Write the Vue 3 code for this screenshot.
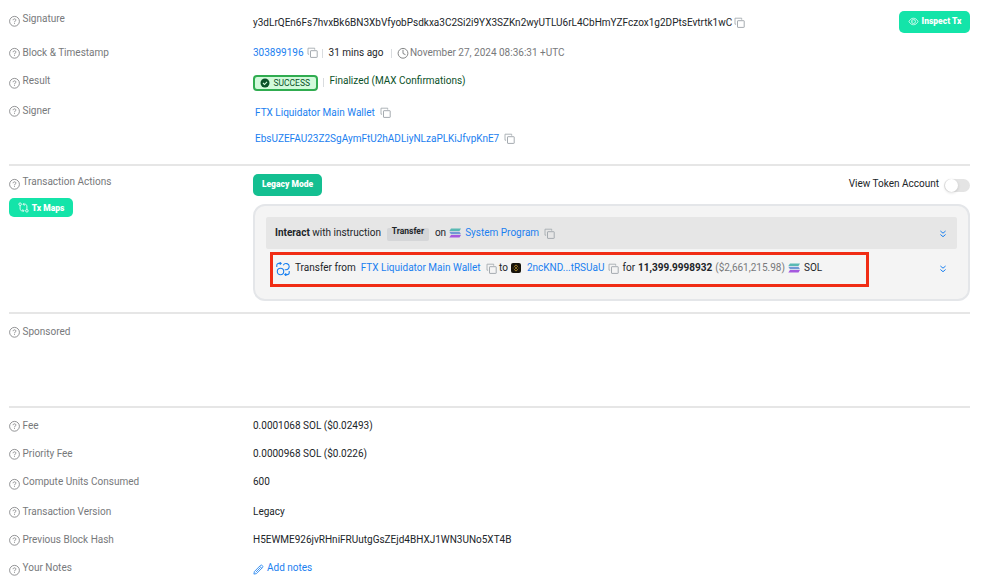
<script setup>
import { h, ref } from 'vue'

const showTokens = ref(false)

const details = [
  { label: 'Fee', value: '0.0001068 SOL ($0.02493)', height: 28 },
  { label: 'Priority Fee', value: '0.0000968 SOL ($0.0226)', height: 28 },
  { label: 'Compute Units Consumed', value: '600', height: 30, low: true },
  { label: 'Transaction Version', value: 'Legacy', height: 28 },
  { label: 'Previous Block Hash', value: 'H5EWME926jvRHniFRUutgGsZEjd4BHXJ1WN3UNo5XT4B', height: 28 },
]

const svg = (cls, viewBox, paths) => () =>
  h('svg', { class: cls, viewBox, fill: 'none', stroke: 'currentColor' }, paths())

const HelpIcon = svg('help', '0 0 12 12', () => [
  h('circle', { cx: 5.5, cy: 6.3, r: 4.9, 'stroke-width': 0.8 }),
  h('path', { d: 'M4.1 5.2C4.1 3.4 6.9 3.4 6.9 5.1C6.9 6.1 5.5 6 5.5 7.3M5.5 8.2V9', 'stroke-width': 0.8 }),
])
const CopyIcon = svg('copy', '0 0 12 12', () => [
  h('path', { d: 'M1 7.2V1.2H7.7V2.7M1 7.2H2.1', 'stroke-width': 0.9 }),
  h('rect', { x: 3.5, y: 3.7, width: 6.7, height: 6.7, rx: 0.4, 'stroke-width': 1 }),
])
const SolIcon = () =>
  h('svg', { class: 'sol', viewBox: '0 0 12 10' }, [
    h('path', { d: 'M2 .5H12L10.5 3H.3Z', fill: '#59b9b3' }),
    h('path', { d: 'M.3 3.8H10.5L12 6.2H2Z', fill: '#7398d5' }),
    h('path', { d: 'M2 7H12L10.5 9.5H.3Z', fill: '#a559de' }),
  ])
const ChevronIcon = svg('chevron', '0 0 8 8', () => [
  h('path', { d: 'M1.4 1L4 3.2L6.6 1M1.4 4.5L4 6.7L6.6 4.5', 'stroke-width': 1 }),
])
</script>

<template>
  <div class="page">
    <section class="section overview">
      <div class="row signature">
        <div class="label low"><HelpIcon /><span>Signature</span></div>
        <div class="value">
          <span class="sig">y3dLrQEn6Fs7hvxBk6BN3XbVfyobPsdkxa3C2Si2i9YX3SZKn2wyUTLU6rL4CbHmYZFczox1g2DPtsEvtrtk1wC</span>
          <CopyIcon />
        </div>
        <button class="btn inspect">
          <svg viewBox="0 0 12 10" fill="none" stroke="currentColor" stroke-width=".8">
            <path d="M1 5C3 .2 9 .2 11 5C9 9.8 3 9.8 1 5Z" />
            <circle cx="6" cy="5" r="2.2" />
            <path d="M5 5.2L6 4.2" />
          </svg>
          <span>Inspect Tx</span>
        </button>
      </div>
      <div class="row block">
        <div class="label"><HelpIcon /><span>Block &amp; Timestamp</span></div>
        <div class="value">
          <a class="number">303899196</a>
          <CopyIcon />
          <i class="bar"></i>
          <span class="ago">31 mins ago</span>
          <i class="bar"></i>
          <svg class="clock" viewBox="0 0 12 12" fill="none" stroke="currentColor" stroke-width=".9">
            <circle cx="6" cy="6.3" r="4.9" />
            <path d="M6 2.8V6.5L8.5 7.7" />
          </svg>
          <span class="muted date">November 27, 2024 08:36:31 +UTC</span>
        </div>
      </div>
      <div class="row result">
        <div class="label low"><HelpIcon /><span>Result</span></div>
        <div class="value">
          <span class="badge">
            <svg viewBox="0 0 10 10">
              <circle cx="5" cy="5" r="4.5" fill="#0a5128" />
              <path d="M3 5L4.5 6.5L7 3.8" fill="none" stroke="#d5ffdf" stroke-width="1.1" />
            </svg>
            <span>SUCCESS</span>
          </span>
          <i class="bar"></i>
          <span class="finalized">Finalized (MAX Confirmations)</span>
        </div>
      </div>
      <div class="row signer">
        <div class="label"><HelpIcon /><span>Signer</span></div>
        <div class="value stack">
          <div class="line"><a class="wallet">FTX Liquidator Main Wallet</a><CopyIcon /></div>
          <div class="line"><a class="address">EbsUZEFAU23Z2SgAymFtU2hADLiyNLzaPLKiJfvpKnE7</a><CopyIcon /></div>
        </div>
      </div>
    </section>

    <section class="section actions">
      <div class="side">
        <div class="label low"><HelpIcon /><span>Transaction Actions</span></div>
        <button class="btn maps">
          <svg viewBox="0 0 12 12" fill="none" stroke="currentColor" stroke-width=".9">
            <circle cx="2.3" cy="2.4" r="1.4" />
            <circle cx="9.7" cy="9.6" r="1.4" />
            <path d="M2.3 3.9V8.2L3.6 9.5H6.3M5 8L6.5 9.5L5 11M9.7 8.1V3.8L8.4 2.5H5.7M7 1L5.5 2.5L7 4" />
          </svg>
          <span>Tx Maps</span>
        </button>
      </div>
      <div class="main">
        <div class="toolbar">
          <button class="btn mode">Legacy Mode</button>
          <div class="toggle" @click="showTokens = !showTokens">
            <span>View Token Account</span>
            <span :class="{ switch: true, on: showTokens }"></span>
          </div>
        </div>
        <div class="card">
          <div class="entry program">
            <span class="interact"><b>Interact</b> with instruction</span>
            <span class="tag">Transfer</span>
            <span class="on-word">on</span>
            <SolIcon />
            <a class="sys">System Program</a>
            <CopyIcon />
            <ChevronIcon />
          </div>
          <div class="entry transfer">
            <svg class="swap" viewBox="0 0 14 14" fill="none" stroke="currentColor" stroke-width="1.1">
              <circle cx="4.5" cy="9.5" r="3.2" />
              <path d="M7.3 3.2A3.1 3.1 0 1 1 10.2 7.7H8.7M.8 5V3.3C.8 2.1 1.7 1.4 2.9 1.4H5M3.8 .1L5.2 1.4L3.8 2.7M13.2 9V10.7C13.2 11.9 12.3 12.6 11.1 12.6H9M10.2 11.3L8.8 12.6L10.2 13.9" />
            </svg>
            <span class="from">Transfer from</span>
            <a class="wallet">FTX Liquidator Main Wallet</a>
            <CopyIcon />
            <span class="to">to</span>
            <svg class="exchange" viewBox="0 0 10 10">
              <rect width="10" height="10" rx="2" fill="#17130b" />
              <path d="M3 3.8L5 1.9L7 3.8M3 6.2L5 8.1L7 6.2M1.8 5H2.4M7.6 5H8.2" fill="none" stroke="#b18a2c" stroke-width=".9" />
              <path d="M5 3.8L6.2 5L5 6.2L3.8 5Z" fill="#b18a2c" />
            </svg>
            <a class="dest">2ncKND...tRSUaU</a>
            <CopyIcon />
            <span class="for">for</span>
            <b class="amount">11,399.9998932</b>
            <span class="muted usd">($2,661,215.98)</span>
            <SolIcon />
            <span class="token">SOL</span>
            <ChevronIcon />
          </div>
          <div class="highlight"></div>
        </div>
      </div>
    </section>

    <section class="section sponsored">
      <div class="label"><HelpIcon /><span>Sponsored</span></div>
    </section>

    <section class="details">
      <div v-for="item in details" :key="item.label" class="row" :style="{ height: item.height + 'px' }">
        <div :class="{ label: true, low: item.low }"><HelpIcon /><span>{{ item.label }}</span></div>
        <div class="value">{{ item.value }}</div>
      </div>
      <div class="row">
        <div class="label low"><HelpIcon /><span>Your Notes</span></div>
        <a class="value notes">
          <svg class="pencil" viewBox="0 0 12 12" fill="none" stroke="currentColor" stroke-width=".9">
            <path d="M1 11L1.5 8.2L8.3 1.4C9.4 .4 11.6 2.5 10.5 3.7L3.8 10.5ZM7.3 2.4L9.5 4.6M3 9L8 4" />
          </svg>
          <span>Add notes</span>
        </a>
      </div>
    </section>
  </div>
</template>

<style>
body {
  background: #fff;
}
</style>

<style scoped>
.page {
  box-sizing: border-box;
  width: 981px;
  height: 588px;
  padding: 12px 11px 0 9px;
  overflow: hidden;
  font-family: Roboto, sans-serif;
  font-size: 10px;
  line-height: 14px;
  color: #212529;
  white-space: nowrap;
}

.section {
  box-sizing: border-box;
  border-bottom: 2px solid #e6e6e6;
}

.overview {
  height: 154px;
}

.row {
  display: flex;
}

.label {
  display: flex;
  flex: none;
  width: 244px;
  height: 14px;
  color: #77797b;
}

.help {
  flex: none;
  width: 12px;
  height: 12px;
  margin: 1px 1.5px 0 0;
}

.low .help {
  margin-top: 3px;
}

.value {
  display: flex;
}

a {
  color: #1a80f0;
  cursor: pointer;
}

.muted {
  color: #77797b;
}

.copy {
  flex: none;
  width: 12px;
  height: 12px;
  margin-top: 1px;
  color: #a5abb0;
}

.bar {
  width: 1px;
  height: 9px;
  margin-top: 3px;
  background: #d9dcdf;
}

.btn {
  display: flex;
  align-items: center;
  justify-content: center;
  padding: 0;
  border: 0;
  border-radius: 5px;
  background: #14e4a9;
  color: #fff;
  font: 900 8.5px/12px Roboto, sans-serif;
}

.signature {
  height: 34px;
}

.signature .value {
  margin-top: 4px;
}

.sig + .copy {
  margin-left: 2px;
}

.inspect {
  width: 71px;
  height: 22px;
  margin: -1px 0 0 auto;
}

.inspect svg {
  width: 11px;
  height: 9px;
  margin: -1px 3px 0 0;
}

.inspect span {
  margin-top: -2px;
}

.block {
  height: 28px;
}

.block .bar:nth-of-type(1) {
  margin: 3px 6px 0 3px;
}

.ago + .bar {
  margin: 3px 5px 0 7.5px;
}

.number + .copy {
  margin-left: 3px;
}

.clock {
  width: 12px;
  height: 12px;
  margin: 1px 1px 0 0;
  color: #77797b;
}

.result {
  height: 30px;
}

.badge {
  box-sizing: border-box;
  display: flex;
  align-items: center;
  width: 65px;
  height: 16px;
  margin: 1px 5px 0 0;
  padding-left: 5px;
  border: 2px solid #30ac50;
  border-radius: 4px;
  background: #d2fadb;
  color: #0a5128;
  font-size: 8.5px;
}

.badge svg {
  width: 10px;
  height: 10px;
  margin-right: 3.5px;
}

.result .bar {
  margin: 4px 5.5px 0 0;
}

.finalized {
  color: #0a5128;
}

.stack {
  display: block;
  padding: 2px 0 0 2px;
}

.line {
  display: flex;
  height: 26px;
}

.line .copy {
  margin-left: 5px;
}

.actions {
  display: flex;
  height: 148px;
  padding-top: 9px;
}

.side {
  width: 244px;
}

.maps {
  width: 64px;
  height: 19px;
  margin-top: 9px;
}

.maps svg {
  width: 11px;
  height: 11px;
  margin-right: 3px;
}

.main {
  flex: 1;
}

.toolbar {
  display: flex;
  justify-content: space-between;
  height: 29px;
}

.mode {
  width: 69px;
  height: 22px;
  margin-top: -1px;
  padding-bottom: 2px;
  background: #14bf91;
}

.toggle {
  display: flex;
  cursor: pointer;
}

.toggle span:first-child {
  margin: 2px 5px 0 0;
}

.switch {
  width: 26px;
  height: 13px;
  margin-top: 4px;
  border-radius: 7px;
  background: #e4e4e4;
}

.switch::before {
  content: '';
  display: block;
  width: 13px;
  height: 13px;
  margin-left: 1px;
  border-radius: 50%;
  background: #fff;
  box-shadow: 0 1px 3px rgba(0, 0, 0, 0.15);
}

.switch.on::before {
  margin-left: 12px;
}

.card {
  position: relative;
  box-sizing: border-box;
  height: 97px;
  padding: 11px 11px 0;
  border: 2px solid #e4e6e9;
  border-radius: 12px;
  background: #f4f4f4;
}

.entry {
  display: flex;
  box-sizing: border-box;
  height: 32px;
  padding: 9px 9px 0;
}

.program {
  border-radius: 2px;
  background: #e6e6e6;
}

.transfer {
  margin-top: 3px;
}

.tag {
  width: 42px;
  height: 13px;
  margin: 2px 6px 0;
  border-radius: 2px;
  background: #d5d6d8;
  font-size: 8.5px;
  font-weight: 700;
  line-height: 7px;
  text-align: center;
}

.sol {
  flex: none;
  width: 12px;
  height: 10px;
  margin: 2px 4px 0 3px;
}

.entry .copy {
  margin: 2px 0 0 5px;
}

.chevron {
  width: 8px;
  height: 8px;
  margin: 4px 1px 0 auto;
  color: #1a80f0;
}

.swap {
  width: 14px;
  height: 14px;
  margin: 1px 5px 0 1px;
  color: #1a80f0;
}

.from {
  margin-right: 5px;
}

.to {
  margin: 0 3px 0 1.5px;
}

.exchange {
  width: 10px;
  height: 10px;
  margin: 2px 6px 0 0;
}

.dest + .copy {
  margin-left: 4px;
}

.for {
  margin: 0 3px 0 2px;
}

.usd {
  margin-left: 3px;
}

/* frame around the main transfer */
.highlight {
  position: absolute;
  top: 46px;
  left: 15px;
  box-sizing: border-box;
  width: 599px;
  height: 35px;
  border: 3px solid #f02c14;
  pointer-events: none;
}

.sponsored {
  height: 94px;
  padding-top: 11px;
}

.details {
  padding-top: 11px;
}

.pencil {
  width: 11px;
  height: 11px;
  margin: 3px 3px 0 0;
}
</style>
